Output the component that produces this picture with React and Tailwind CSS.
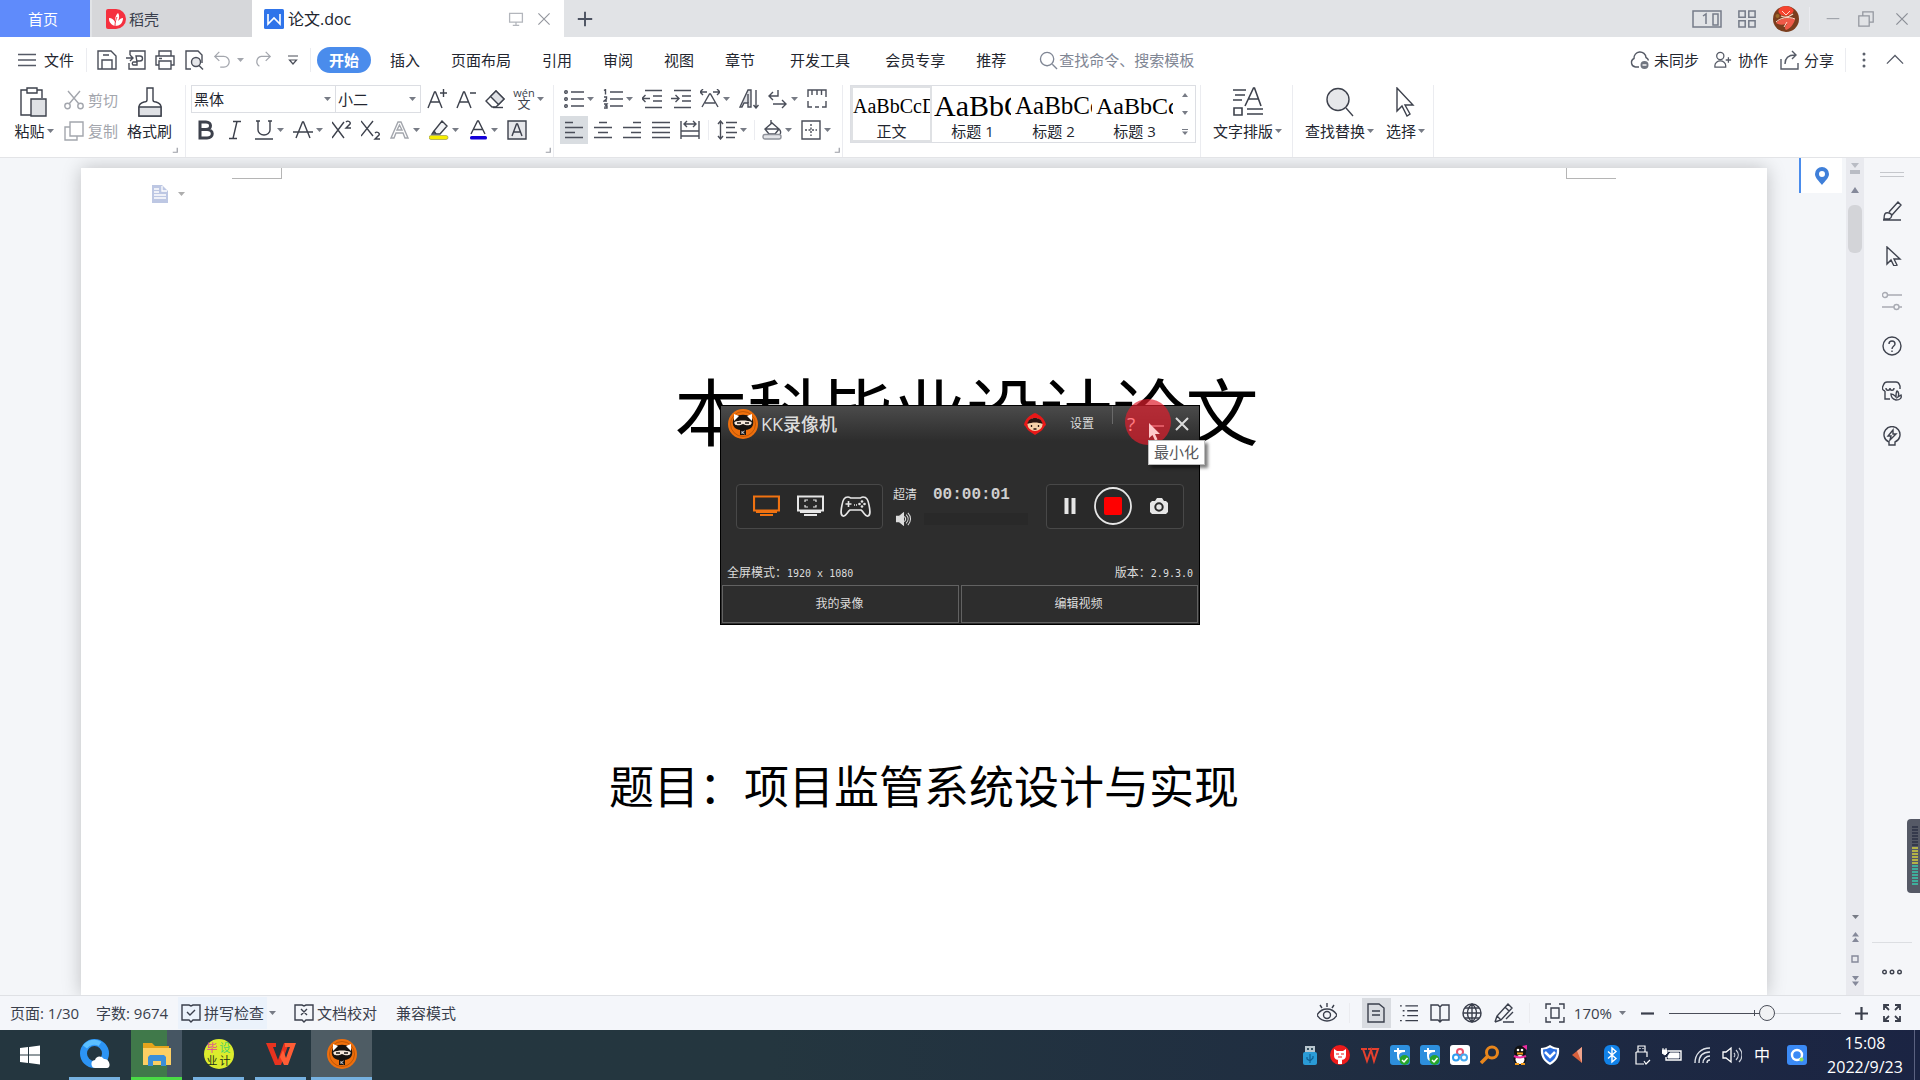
import { useState } from 'react';
import clsx from 'clsx';

// stroke icon drawn on a 20x20 grid
function Icon({ d, className = 'w-5 h-5', box = '0 0 20 20', stroke = 1.4, children }) {
  return (
    <svg viewBox={box} className={clsx('shrink-0', className)} fill="none" stroke="currentColor" strokeWidth={stroke} aria-hidden="true">
      {d && <path d={d} />}
      {children}
    </svg>
  );
}

function Caret({ className = 'text-[#777b85]' }) {
  return (
    <svg viewBox="0 0 7 4" className={clsx('w-[7px] h-1 shrink-0', className)} fill="currentColor" aria-hidden="true">
      <path d="M0 0h7L3.5 4z" />
    </svg>
  );
}

function Glyph({ label, caret, d, children, stroke }) {
  return (
    <button aria-label={label} className="flex items-center gap-[3px] h-7 shrink-0">
      <Icon d={d} stroke={stroke}>{children}</Icon>
      {caret && <Caret />}
    </button>
  );
}

const Divider = ({ className = 'h-[72px]' }) => <div className={clsx('w-px bg-[#ebecf0] shrink-0', className)} />;

const Corner = () => (
  <Icon className="w-1.5 h-1.5 mr-0.5 mb-1 self-end text-[#9a9da5]" box="0 0 8 8" stroke={1.6} d="M7 1v6H1" />
);

function TitleBar() {
  return (
    <header className="flex h-[37px] bg-[#e1e3e6] text-[#3a3f4d]">
      <button className="w-[90px] pr-1 bg-[#5f8bfb] text-white">首页</button>
      <button className="w-[160px] ml-0.5 pl-3.5 flex items-center gap-[3px] bg-[#d6d7da]">
        <svg viewBox="0 0 20 20" className="w-5 h-5" aria-hidden="true">
          <path d="M2 0h8a10 10 0 0 1 0 20H2a2 2 0 0 1-2-2V2a2 2 0 0 1 2-2z" fill="#f5303f" />
          <path d="M9 17C3 15 3 11 3 9c3 0 5 2 6 4 0-5 1-7 3-9 2 3 1 6 0 8 2-2 3-3 5-3 0 5-3 8-8 8z" fill="#fff" />
          <path d="M9 17c0-4 1-7 2-9" stroke="#f5303f" fill="none" />
        </svg>
        稻壳
      </button>
      <div className="w-[312px] bg-white flex items-center pl-3 pr-3 text-[16px] text-[#20242e]">
        <svg viewBox="0 0 20 20" className="w-5 h-5 mr-1" aria-hidden="true">
          <rect width="20" height="20" rx="1.5" fill="#2f74ea" />
          <path d="M4 5v10l6-6 6 6V5" stroke="#fff" strokeWidth="1.6" fill="none" />
        </svg>
        <span className="grow">论文.doc</span>
        <Icon className="w-4 h-4 mr-3 text-[#b3b6bc]" stroke={1.6} d="M2 3h16v11H2zM10 14v4M6 18h8" />
        <button aria-label="关闭标签"><Icon className="w-4 h-4 text-[#93969d]" d="M3 3l14 14M17 3L3 17" /></button>
      </div>
      <button aria-label="新建" className="w-[42px] grid place-items-center">
        <Icon className="w-4 h-4 text-[#4c5361]" stroke={2.4} d="M10 1v18M1 10h18" />
      </button>
      <div className="ml-auto flex items-center pr-2.5 text-[#767c89]">
        <Icon className="w-[30px] h-[18px]" box="0 0 30 18" stroke={1.5} d="M1 1h28v16H1zM21 4h5v11h-5zM11 6l3-2v10" />
        <Icon className="w-[18px] h-[18px] ml-4" stroke={1.7} d="M1 1h7v7H1zM12 1h7v7h-7zM1 12h7v7H1zM12 12h7v7h-7z" />
        <svg viewBox="0 0 26 26" className="w-[26px] h-[26px] ml-[17px]" aria-hidden="true">
          <circle cx="13" cy="13" r="13" fill="#7a3d1d" />
          <path d="M6 3c4-4 10-4 14 0 2 3-2 6-7 7C8 10 4 7 6 3z" fill="#f5432f" />
          <path d="M8 10c4 2 8 1 12-2" stroke="#f7d3c0" strokeWidth="1.2" fill="none" />
          <path d="M3 17c4-5 13-6 19-4-1 6-6 10-9 11-2-2-1-4 1-6-5 1-8 1-11-1z" fill="#ee5a48" />
          <path d="M3 16c4-4 12-6 19-3M11 21l3-5M9 5l4 4 4-4" stroke="#ffd9c9" strokeWidth="1" fill="none" />
          <circle cx="4.500" cy="10" r="2" fill="#9c6a28" />
        </svg>
        <Divider className="h-6 ml-2.5 mr-4 bg-[#c9ccd1]" />
        <button aria-label="最小化"><Icon className="w-3.5 h-3.5 text-[#9498a0]" d="M1 9.500h18" /></button>
        <button aria-label="还原" className="ml-[18px]"><Icon className="w-4 h-4 text-[#9498a0]" stroke={1.6} d="M1 6h13v13H1zM6 6V1h13v13h-5" /></button>
        <button aria-label="关闭" className="ml-5"><Icon className="w-4 h-4 text-[#8a8e96]" stroke={1.5} d="M3 3l14 14M17 3L3 17" /></button>
      </div>
    </header>
  );
}

function MenuRow() {
  return (
    <nav className="flex items-center h-[46px] pl-[18px] pr-4 text-[#23262f] whitespace-nowrap">
      <button className="flex items-center gap-2">
        <Icon className="w-[18px] h-4 text-[#555a66]" box="0 0 18 16" d="M0 2.500h18M0 8h18M0 13.500h18" />
        文件
      </button>
      <Divider className="h-6 ml-3 mr-2.5" />
      <div className="flex items-center text-[#4a4e59]">
        <button aria-label="保存"><Icon d="M1 1h13l5 5v13H1zM5 19v-9h10v9M6 5h6" /></button>
        <button aria-label="输出为PDF" className="ml-[9px]"><Icon d="M4 5V1h15v18H3v-6M0 8h7M4 5l3 3-3 3M10 6h4a2 2 0 0 1 0 5h-3v4H7a2 2 0 0 1 0-3h4z" /></button>
        <button aria-label="打印" className="ml-[9px]"><Icon d="M4 6V1h12v5M4 15H1V6h18v9h-3M4 11h12v8H4zM4 8.500h3" /></button>
        <button aria-label="打印预览" className="ml-[9px]">
          <Icon d="M7 19H2V1h12l4 4v8"><circle cx="12" cy="12" r="4.500" fill="#e6e7ea" /><path d="M15 15.500l4 4" /></Icon>
        </button>
        <button aria-label="撤销" className="flex items-center gap-1.5 ml-[9px] text-[#a3a6ad]">
          <Icon className="w-[18px] h-5" d="M7 1L2 6l5 5M2 6h10a6 6 0 0 1 0 12H8" /><Caret className="text-[#a3a6ad]" />
        </button>
        <button aria-label="恢复" className="ml-2.5 text-[#a3a6ad]"><Icon className="w-[18px] h-5" d="M13 1l5 5-5 5M18 6H8a6 6 0 0 0-2 11" /></button>
        <button aria-label="自定义快速访问" className="ml-4"><Icon className="w-[10px] h-3" box="0 0 10 12" stroke={1.2} d="M0 2h10M1.500 6L5 10l3.500-4z" /></button>
      </div>
      <Divider className="h-6 ml-3 mr-1.5" />
      <button className="w-[54px] h-[26px] rounded-full bg-[#4a8cec] text-white font-bold">开始</button>
      <div className="flex gap-[31px] ml-[19px]">
        <button>插入</button>
        <button>页面布局</button>
        <button>引用</button>
        <button>审阅</button>
        <button>视图</button>
        <button>章节</button>
        <button className="mx-1">开发工具</button>
        <button>会员专享</button>
        <button>推荐</button>
      </div>
      <label className="flex items-center gap-px ml-[33px] text-[#7f8694]">
        <Icon className="w-[19px] h-[19px]" d="M14 14l5 5"><circle cx="8.500" cy="8.500" r="7" /></Icon>
        <input aria-label="搜索" placeholder="查找命令、搜索模板" className="w-40 outline-none placeholder:text-[#7f8694]" />
      </label>
      <div className="ml-auto flex items-center text-[#23262f]">
        <button className="flex items-center gap-1">
          <Icon className="w-5 h-5 text-[#555a66]" d="M9 17H5.500A4.500 4.500 0 0 1 4 8.500a6 6 0 0 1 12-1 4.500 4.500 0 0 1 2.500 3">
            <circle cx="14.500" cy="15" r="4" fill="#70757f" stroke="none" /><path d="M12.500 15h4" stroke="#fff" />
          </Icon>
          未同步
        </button>
        <button className="flex items-center gap-1.5 ml-[15px]">
          <Icon className="w-[18px] h-5 text-[#555a66]" d="M1 18v-2c0-3 3-5 6-5s6 2 6 5v2zM13 10h6M16 7v6"><circle cx="7" cy="5.500" r="4" /></Icon>
          协作
        </button>
        <button className="flex items-center gap-1 ml-3">
          <Icon className="w-5 h-5 text-[#555a66]" d="M1 9v10h17v-6M5 14c0-6 4-9 10-9M12 1l4 4-4 4" />
          分享
        </button>
        <Divider className="h-6 ml-[11px] mr-4" />
        <button aria-label="更多">
          <Icon className="w-1 h-4" box="0 0 4 16" stroke={0}><g fill="#5b606b"><circle cx="2" cy="2" r="1.500" /><circle cx="2" cy="8" r="1.500" /><circle cx="2" cy="14" r="1.500" /></g></Icon>
        </button>
        <button aria-label="收起功能区" className="ml-5"><Icon className="w-[18px] h-[18px] text-[#555a66]" d="M1 14l9-9 9 9" /></button>
      </div>
    </nav>
  );
}

function BigTool({ label, caret, children, className }) {
  return (
    <button className={clsx('flex flex-col items-center', className)}>
      <span className="h-[34px] grid place-items-center">{children}</span>
      <span className="flex items-center gap-0.5 h-6 text-[#23262f]">{label}{caret && <Caret />}</span>
    </button>
  );
}

function FontGroup() {
  return (
    <div className="ml-[5px] w-[354px]">
      <div className="flex items-center gap-[9px] h-7 text-[#3d414c]">
        <div className="flex h-7 w-[230px] border border-[#dcdee3] text-[#23262f] mr-[-3px]">
          <label className="relative flex items-center w-[144px] border-r border-[#dcdee3]">
            <select aria-label="字体" className="appearance-none w-full pl-0.5 outline-none"><option>黑体</option></select>
            <span className="absolute right-1 flex pointer-events-none"><Caret /></span>
          </label>
          <label className="relative flex items-center grow">
            <select aria-label="字号" className="appearance-none w-full pl-0.5 outline-none"><option>小二</option></select>
            <span className="absolute right-1 flex pointer-events-none"><Caret /></span>
          </label>
        </div>
        <Glyph label="增大字号" d="M1 19L7.500 3h1L15 19M3.500 13h9M13 4h7M16.500 0v8" />
        <Glyph label="减小字号" d="M1 19L7.500 3h1L15 19M3.500 13h9M14 4h6" />
        <Glyph label="清除格式"><path d="M11 2l8 8-8 8H7l-6-6z" /><path d="M5.500 7.500l8 8L19 10l-8-8z" fill="#dfe1e5" /><path d="M8 18.500h10" /></Glyph>
        <button aria-label="拼音指南" className="flex items-center gap-[3px] h-7 shrink-0">
          <span aria-hidden="true" className="w-5 flex flex-col items-center text-[11px] leading-[8px]">
            <span>wén</span>
            <span className="text-[13px] leading-[12px]">文</span>
          </span>
          <Caret />
        </button>
      </div>
      <div className="flex items-center gap-[9px] h-7 mt-[3px] pl-[5px] text-[#3d414c]">
        <Glyph label="加粗" stroke={3} d="M4 2h6c6 0 6 7.500 0 7.500H4h7c7 0 7 8.500 0 8.500H4z" />
        <Glyph label="倾斜" d="M8 1.500h8M4 18.500h8M12 1.500L8 18.500" />
        <Glyph label="下划线" caret d="M4 1v9a6 5 0 0 0 12 0V1M2 1h4M14 1h4M1 19h18" />
        <Glyph label="删除线" caret d="M3 18L9.500 2h1L17 18M0 12h20" />
        <Glyph label="上标" d="M0 2l12 16M12 2L0 18M14 2c2-2 5 0 4 2l-4 4h5" />
        <Glyph label="下标" d="M0 1l12 15M12 1L0 16M14 13c2-2 5 0 4 2l-4 4h5" />
        <Glyph label="文字效果" caret><path d="M1 18L8 2h3l7 16h-3l-2-5H6l-2 5zM7 10h5L9.500 5z" stroke="#a3a6ad" /></Glyph>
        <Glyph label="突出显示" caret><path d="M13 1l5 5-7 8H7l-2-3zM5 11l-2 3h4" fill="#f3f4f6" /><rect y="15.500" width="19" height="4" rx="2" fill="#f7ee00" stroke="#8c8b4a" strokeWidth=".6" /></Glyph>
        <Glyph label="字体颜色" caret><path d="M3 14L9.500 1h1L17 14M5.500 9.500h9" /><rect y="16" width="17" x="2" height="3.500" rx="1.500" fill="#1400d8" stroke="none" /></Glyph>
        <Glyph label="字符底纹"><path d="M1 1h18v18H1z" fill="#e6e7ea" /><path d="M5 16l4.500-12h1L15 16M7 12h6" /></Glyph>
      </div>
    </div>
  );
}

function ParagraphGroup() {
  return (
    <div className="ml-[5px] pl-[5px] w-[275px] text-[#4a4e59]">
      <div className="flex items-center gap-[9px] h-7">
        <Glyph label="项目符号" caret d="M7 3h13M7 10h13M7 17h13"><circle cx="2" cy="3" r="1.300" /><circle cx="2" cy="10" r="1.300" /><circle cx="2" cy="17" r="1.300" /></Glyph>
        <Glyph label="编号" caret d="M7 3h13M7 10h13M7 17h13M1 1.500l1.500-1v5M1 8h2.500v2L1 12h3M1 15h3l-1.500 2H4v2H1" />
        <Glyph label="减少缩进" d="M3 1.500h17M11 7h9M11 12h9M3 18.500h17M8 9.500H0M3.500 6L0 9.500 3.500 13" />
        <Glyph label="增加缩进" d="M3 1.500h17M11 7h9M11 12h9M3 18.500h17M0 9.500h8M4.500 6L8 9.500 4.500 13" />
        <Glyph label="字符缩放" caret d="M2 18L9.500 5h1L18 18M5 14h10M0 3h7M3 0L0 3l3 3M20 3h-7M17 0l3 3-3 3" />
        <Glyph label="排序"><path d="M1 18L9 1h3v17h-3v-4H5l-2 4z" fill="#dfe1e5" /><path d="M9 5v9M17 1v18M14.500 16l2.500 3 2.500-3" /></Glyph>
        <Glyph label="换行" caret d="M10 1v6H1M5 3L1 7l4 4M5 15h13M14 11l4 4-4 4" />
        <Glyph label="制表位" d="M1 8V1h18v7M5 1v5M10 1v5M14.500 1v5M1 12v6h4M15 18h4v-6M8 18h4" />
      </div>
      <div className="flex items-center gap-[9px] h-7 mt-[3px]">
        <button aria-label="左对齐" className="h-7 px-1 -mx-1 bg-[#d9dde1]"><Icon d="M1 2.500h8M1 7.500h18M1 12.500h10M1 17.500h18" /></button>
        <Glyph label="居中对齐" d="M6 2.500h8M1 7.500h18M5 12.500h10M1 17.500h18" />
        <Glyph label="右对齐" d="M11 2.500h8M1 7.500h18M9 12.500h10M1 17.500h18" />
        <Glyph label="两端对齐" d="M1 2.500h18M1 7.500h18M1 12.500h18M1 17.500h18" />
        <Glyph label="分散对齐" d="M1 1v18M19 1v18M4 4h12M7 1L4 4l3 3M13 1l3 3-3 3M1 11h18M1 16h18" />
        <Divider className="h-5 -mx-px" />
        <Glyph label="行距" caret d="M3.500 1v18M1 4l2.500-3L6 4M1 16l2.500 3L6 16M9 2.500h11M9 7.500h9M9 12.500h11M9 17.500h9" />
        <Divider className="h-5 -mx-0.5" />
        <Glyph label="底纹颜色" caret><path d="M9 0v4M3 9l7-6 7 6-4 5H7zM3 9h14M17 9c2 2 2 4 1 5" /><rect x="1" y="14.500" width="18" height="4.500" rx="2" fill="#e3e4e8" stroke="#8f929a" /></Glyph>
        <Glyph label="边框" caret><path d="M1 1h18v18H1z" /><path d="M10 4v12M4 10h12" strokeDasharray="2 1.500" /></Glyph>
      </div>
    </div>
  );
}

const styles = [
  { name: '正文', size: 'text-[20px]' },
  { name: '标题 1', size: 'text-[30px]' },
  { name: '标题 2', size: 'text-[25px]' },
  { name: '标题 3', size: 'text-[24px]' },
];

function StyleGallery() {
  return (
    <div className="ml-[7px] flex h-[58px] border border-[#dcdee3]">
      {styles.map((s, i) => (
        <button
          key={s.name}
          className={clsx('w-[81px] h-14 overflow-hidden border-2', i === 0 ? 'border-[#dfe1e4]' : 'border-transparent')}
        >
          <span className={clsx("block h-[34px] leading-[36px] text-left text-black overflow-hidden whitespace-nowrap font-['Liberation_Serif',serif]", s.size)}>AaBbCcDd</span>
          <span className="block h-5 leading-[18px] text-[#23262f]">{s.name}</span>
        </button>
      ))}
      <div className="w-5 flex flex-col items-center justify-around text-[#777b85]">
        <Icon className="w-1.5 h-1" box="0 0 6 4" stroke={0}><path d="M0 4h6L3 0z" fill="currentColor" /></Icon>
        <Icon className="w-1.5 h-1" box="0 0 6 4" stroke={0}><path d="M0 0h6L3 4z" fill="currentColor" /></Icon>
        <Icon className="w-1.5 h-1.5" box="0 0 6 6" stroke={0}><path d="M0 0h6v1H0zM0 2.500h6L3 6z" fill="currentColor" /></Icon>
      </div>
    </div>
  );
}

function Ribbon() {
  return (
    <div className="flex h-[74px] pt-0.5 text-[#3d414c] whitespace-nowrap">
      <div className="flex w-[185px] pl-[13px]">
        <BigTool label="粘贴" caret className="w-[42px]">
          <Icon className="w-7 h-[30px]" box="0 0 28 30" d="M7 3H1v25h10M17 3h5v8M7 1h10v5H7z"><path d="M11 12h15v17H11z" fill="#dfe1e5" /></Icon>
        </BigTool>
        <div className="ml-[9px] w-[54px] text-[#a3a6ad]">
          <button className="flex items-center gap-1 h-[30px]">
            <Icon d="M4 1l11 13M16 1L5 14"><circle cx="3.500" cy="16" r="2.700" /><circle cx="16.500" cy="16" r="2.700" /></Icon>剪切
          </button>
          <button className="flex items-center gap-1 h-8">
            <Icon d="M6 1h13v14H6zM6 6H1v13h12v-4" />复制
          </button>
        </div>
        <BigTool label="格式刷" className="ml-[9px]">
          <Icon className="w-6 h-[30px]" box="0 0 24 30" d="M9 1h6v12c0 1 1 2 3 2 3 1 5 2 5 5v9H1v-9c0-3 2-4 5-5 2 0 3-1 3-2z"><path d="M1 20h22v9H1z" fill="#dfe1e5" /></Icon>
        </BigTool>
        <Corner />
      </div>
      <Divider />
      <FontGroup />
      <Corner />
      <Divider />
      <ParagraphGroup />
      <Corner />
      <div className="w-px bg-[#ebecf0]" />
      <StyleGallery />
      <Divider className="h-[72px] ml-1" />
      <BigTool label="文字排版" caret className="ml-3">
        <Icon className="w-[30px] h-[30px]" box="0 0 30 30" stroke={1.6} d="M0 3h13M2 8h10M0 13h9M12 19L20.500 1h1L28 19M15 12h11M1 21h8v7H1zM14 22h16M14 27h16" />
      </BigTool>
      <Divider className="h-[72px] ml-2.5" />
      <BigTool label="查找替换" caret className="ml-3">
        <Icon className="w-[30px] h-[30px]" box="0 0 30 30" d="M21 21l7 8"><circle cx="13" cy="12.500" r="11" fill="#e6e7ea" /></Icon>
      </BigTool>
      <BigTool label="选择" caret className="ml-3">
        <Icon className="w-6 h-[30px]" box="0 0 24 30" d="M3 1v23l5-5 5 10 3-2-5-9h8z" />
      </BigTool>
      <Divider className="h-[72px] ml-2" />
    </div>
  );
}

function NinjaLogo({ className }) {
  return (
    <svg viewBox="0 0 30 30" className={className} aria-hidden="true">
      <circle cx="15" cy="15" r="15" fill="#ee6f0c" />
      <circle cx="15" cy="15" r="12.500" fill="none" stroke="#a84b05" strokeWidth=".7" />
      <path d="M7 8c4-3 12-3 16 0 3 3 3 8 0 11-4 3-12 3-16 0-3-3-3-8 0-11z" fill="#17120f" />
      <path d="M6 5l5 2-5 5zM24 5l-5 2 5 5z" fill="#fff" />
      <path d="M6.500 13c4-2 13-2 17 0 1 4-5 4-8.500 2-3.500 2-9.500 2-8.500-2z" fill="#f7e9dc" />
      <path d="M9 14h4M17 14h4" stroke="#17120f" strokeWidth="1.500" />
      <path d="M12 20h6v6h-6z" fill="#17120f" />
      <path d="M14 22v3M16.500 22L14.500 23.500l2 1.500" stroke="#fff" strokeWidth=".8" fill="none" />
    </svg>
  );
}

// floating screen recorder window
function Recorder() {
  const mono = "font-['DejaVu_Sans_Mono','Liberation_Mono',monospace] text-[10px]";
  return (
    <section aria-label="KK录像机" className="absolute left-[720px] top-[405px] w-[480px] h-[220px] border border-black bg-[#2d2d2d] text-[#dcdcdc] text-[12px] flex flex-col">
      <div className="flex items-center h-[35px] pl-[7px] pr-2.5 bg-linear-to-b from-[#4b4b4b] to-[#2d2d2d]">
        <NinjaLogo className="w-[30px] h-[30px]" />
        <h2 className="ml-[3px] text-[18px] font-medium">KK录像机</h2>
        <svg viewBox="0 0 22 22" className="w-[22px] h-[22px] ml-auto" aria-hidden="true">
          <path d="M11 0c5 2 10 6 11 12-2 1-3 5-5 6l-6 4-6-4c-2-1-3-5-5-6C1 6 6 2 11 0z" fill="#e81818" />
          <ellipse cx="11" cy="11.500" rx="7.500" ry="6.500" fill="#f6cfa8" />
          <path d="M3.500 11C4 3 18 3 18.500 11 14 9 8 9 3.500 11z" fill="#2a1512" />
          <path d="M7.500 12v2M14.500 12v2M9.500 16h3" stroke="#2a1512" strokeWidth="1.300" />
        </svg>
        <button className="ml-6">设置</button>
        <span className="w-px h-[18px] bg-[#696969] ml-[18px] self-start" />
        <button aria-label="帮助" className="relative z-10 ml-2.5 w-4 text-[19px] leading-5 text-[#ff7d84]">?</button>
        <button aria-label="最小化" className="ml-1.5 w-6 h-5 grid place-items-center"><Icon className="w-3.5 h-3" box="0 0 14 12" stroke={2} d="M0 8h14" /></button>
        <button aria-label="关闭" className="ml-1.5"><Icon className="w-3.5 h-3.5" box="0 0 14 14" stroke={2} d="M1 1l12 12M13 1L1 13" /></button>
      </div>
      <div className="flex items-center mt-[42px] h-[46px] mx-[15px] shrink-0">
        <div className="flex items-center justify-between w-[147px] h-[45px] pl-4 pr-[11px] border border-[#484848] rounded-sm bg-[#292929]">
          <button aria-label="全屏模式" className="text-[#f07211]"><Icon className="w-[27px] h-[22px]" box="0 0 27 22" stroke={2.2} d="M1 1.500h25v14H1zM3 17h21M7 20h13" /></button>
          <button aria-label="区域模式" className="text-[#e6e6e6]"><Icon className="w-[27px] h-[22px]" box="0 0 27 22" stroke={2} d="M1 1.500h25v14H1zM3 17h21M7 20h13"><path d="M8 7V5h3M16 5h3v2M19 10v2h-3M11 12H8v-2" strokeWidth="1.200" /></Icon></button>
          <button aria-label="游戏模式" className="text-[#e6e6e6]">
            <Icon className="w-[31px] h-[22px]" box="0 0 31 22" stroke={1.6} d="M8 2c-4 0-5 3-6 8s-2 10 1 11 4-4 7-6h11c3 2 4 7 7 6s2-6 1-11-2-8-6-8c-2 0-2 1-3 1h-9c-1 0-1-1-3-1zM8.500 6v6M5.500 9h6">
              <g fill="currentColor" stroke="none"><circle cx="22" cy="6.500" r="1.300" /><circle cx="22" cy="11.500" r="1.300" /><circle cx="19.500" cy="9" r="1.300" /><circle cx="24.500" cy="9" r="1.300" /></g>
              <path d="M14 10h3" strokeDasharray="1 1" />
            </Icon>
          </button>
        </div>
        <div className="ml-2.5 self-stretch flex flex-col justify-between">
          <div className="flex items-center h-6">
            <span>超清</span>
            <time className="ml-4 text-[16px] font-bold text-[#cfcfcf] font-['Liberation_Mono',monospace]">00:00:01</time>
          </div>
          <div className="flex items-center h-5 gap-3 pl-0.5">
            <Icon className="w-[17px] h-3.5" box="0 0 18 16" stroke={1.2} d="M10 5c2 2 2 4 0 6M12 3c3 3 3 7 0 10M14 1c4 4 4 10 0 14"><path d="M1 5h3l5-4v14l-5-4H1z" fill="currentColor" /></Icon>
            <span className="w-[104px] h-3 bg-[#292929]" />
          </div>
        </div>
        <div className="ml-auto flex items-center justify-between w-[138px] h-[45px] pl-[17px] pr-[15px] border border-[#484848] rounded-sm bg-[#292929] text-[#e6e6e6]">
          <button aria-label="暂停"><Icon className="w-3 h-4" box="0 0 12 16" stroke={4} d="M2.500 0v16M9.500 0v16" /></button>
          <button aria-label="停止">
            <Icon className="w-[38px] h-[38px]" box="0 0 38 38" stroke={1.8}><circle cx="19" cy="19" r="18" /><rect x="10" y="10" width="18" height="18" rx="2" fill="#f00" stroke="none" /></Icon>
          </button>
          <button aria-label="截图">
            <Icon className="w-[18px] h-4" box="0 0 18 16" stroke={0}><path d="M2 3h3l2-3h5l2 3h2l2 2v9l-2 2H2l-2-2V5z" fill="currentColor" /><circle cx="9" cy="9" r="3.700" fill="none" stroke="#292929" strokeWidth="2" /></Icon>
          </button>
        </div>
      </div>
      <div className="flex justify-between items-center mt-auto h-6 px-1.5">
        <span>全屏模式：<span className={mono}>1920 x 1080</span></span>
        <span>版本：<span className={mono}>2.9.3.0</span></span>
      </div>
      <div className="grid grid-cols-2 gap-0.5 h-[39px] px-px pb-px shrink-0">
        <button className="border border-[#626262] pr-0.5">我的录像</button>
        <button className="border border-[#626262] pr-0.5">编辑视频</button>
      </div>
      <span className="absolute left-[404px] -top-[7px] w-[46px] h-[46px] rounded-full bg-[#e0202d]/70" />
      <svg viewBox="0 0 12 18" className="absolute left-[428px] top-[17px] w-3 h-[18px]" aria-hidden="true"><path d="M0 0v15l3.500-3L6 17.500l2.500-1L6 11h5z" fill="#ffc9cb" /></svg>
      <div role="tooltip" className="absolute left-[427px] top-[34px] h-[25px] px-[5px] leading-[23px] bg-white border border-[#bdbdbd] text-[15px] text-[#55565a] whitespace-nowrap shadow-[3px_3px_3px_rgba(0,0,0,0.5)]">最小化</div>
    </section>
  );
}

function DocumentArea() {
  return (
    <div className="grow min-w-0 bg-[#f4f6f9] overflow-hidden pt-2.5 pl-[81px] pr-8 flex">
      <article className="grow bg-white text-black shadow-[0_0_18px_rgba(0,0,0,0.22)] font-['Liberation_Sans','Noto_Sans_CJK_SC',sans-serif]">
        <div className="flex justify-between px-[151px]">
          <span className="w-[50px] h-[11px] border-r border-b border-[#b5b5b5]" />
          <span className="w-[50px] h-[11px] border-l border-b border-[#b5b5b5]" />
        </div>
        <button aria-label="段落布局" className="flex items-center gap-2.5 ml-[71px] mt-1.5">
          <Icon className="w-4 h-[18px]" box="0 0 16 18" stroke={1.3}>
            <path d="M0 0h10l6 6v12H0z" fill="#bdc7e3" stroke="none" /><path d="M2 4h5M2 7h5M2 10h12M2 13h12M10 1v5h5" stroke="#fff" />
          </Icon>
          <Caret className="text-[#adadad]" />
        </button>
        <h1 className="mt-[172px] pl-[85px] text-center text-[73px] leading-[80px] whitespace-nowrap">本科毕业设计论文</h1>
        <p className="mt-[306px] text-center text-[45px] leading-[56px] whitespace-nowrap">题目：项目监管系统设计与实现</p>
      </article>
    </div>
  );
}

function ScrollRail() {
  return (
    <div className="w-[18px] shrink-0 bg-[#e9eaef] flex flex-col items-center text-[#85899a]">
      <Icon className="w-3 h-3.5 mt-1 text-[#b9bcc4]" box="0 0 12 14" stroke={0}><path d="M2 1h8L6 6zM1 8h10v4H1z" fill="currentColor" /></Icon>
      <Icon className="w-2 h-1.5 mt-[11px]" box="0 0 8 6" stroke={0}><path d="M0 6h8L4 0z" fill="currentColor" /></Icon>
      <div className="w-3.5 h-12 mt-3 rounded-md bg-[#d3d4d8]" />
      <div className="mt-auto mb-[9px] flex flex-col items-center gap-[13px]">
        <Caret />
        <Icon className="w-[7px] h-2.5" box="0 0 7 10" stroke={0}><path d="M0 4.500h7L3.500 0zM0 10h7L3.500 5.500z" fill="currentColor" /></Icon>
        <Icon className="w-2 h-2" box="0 0 8 8" d="M1 1h6v6H1z" />
        <Icon className="w-[7px] h-2.5" box="0 0 7 10" stroke={0}><path d="M0 0h7L3.500 4.500zM0 5.500h7L3.500 10z" fill="currentColor" /></Icon>
      </div>
    </div>
  );
}

function SideBar() {
  return (
    <aside className="relative w-14 shrink-0 bg-[#f5f6f9] flex flex-col items-center gap-[25px] pt-3.5 pr-px text-[#3f434f]">
      <span className="w-6 h-[5px] border-y border-[#c5c7cc] -mb-px" />
      <button aria-label="样式"><Icon d="M1 19h18M2 18c0-5 1-7 5-6s3 5 0 6zM7 11L16 1l3 3-9 10" /></button>
      <button aria-label="选择"><Icon d="M5 1v17l4-4 3 6 3-1-3-6h6z" /></button>
      <button aria-label="属性" className="text-[#a9abb3]"><Icon d="M6 4h14M0 16h12M17 16h3"><circle cx="3" cy="4" r="2.500" /><circle cx="14.500" cy="16" r="2.500" /></Icon></button>
      <button aria-label="帮助"><Icon d="M7 8c0-4 6-4 6 0 0 2-3 2-3 5M10 14.500V16"><circle cx="10" cy="10" r="9" /></Icon></button>
      <button aria-label="稻壳资源"><Icon d="M3 10v8h5M3 10C0 9 0 7 1 5s1-4 4-4h9c3 0 3 2 4 4v3M4 7c0 3 4 3 4 0 0 3 4 3 4 0M14 19c-4-1-5-3-5-6 3 0 4 2 5 3 0-3 0-5 1-6 2 1 2 4 1 6l3-2c1 3-1 5-5 5z" /></button>
      <button aria-label="智能助手"><Icon d="M7 16a8 8 0 1 1 6 0v3H7zM11 4l-5 6h3l-1 4 6-6h-3z" /></button>
      <div className="mt-auto w-10 border-t border-[#dcdee2] pt-[26px] pb-5 flex justify-center">
        <button aria-label="更多面板"><Icon className="w-5 h-1.5" box="0 0 20 6"><circle cx="2.500" cy="3" r="1.800" /><circle cx="10" cy="3" r="1.800" /><circle cx="17.500" cy="3" r="1.800" /></Icon></button>
      </div>
      <div className="absolute right-0 bottom-[102px] w-[13px] h-[74px] rounded-l bg-[#555966] flex items-center justify-end">
        <svg viewBox="0 0 8 60" className="w-2 h-[60px]" aria-hidden="true">
          {Array.from({ length: 20 }, (_, i) => (
            <rect key={i} x="0" y={i * 3} width="6" height="2" fill={i < 7 ? '#353a4c' : i < 13 ? '#b3b347' : '#3fae9c'} />
          ))}
        </svg>
      </div>
    </aside>
  );
}

function StatusBar() {
  const [zoom, setZoom] = useState(58);
  return (
    <footer className="flex items-center h-[35px] shrink-0 pl-2.5 pr-[18px] bg-[#f4f6fa] border-t border-[#dfe1e5] text-[#3a3f4c] whitespace-nowrap">
      <span className="w-[86px]">页面: 1/30</span>
      <span className="w-[82px]">字数: 9674</span>
      <button className="flex items-center gap-[3px] h-8 w-[89px] pl-[3px] bg-[#ebf2fb]">
        <Icon d="M1 2h7l2 1 2-1h7v15h-7l-2 2-2-2H1zM6 9l3 3 5-5" />拼写检查
      </button>
      <Caret className="ml-0.5 text-[#777b85]" />
      <button className="flex items-center gap-[3px] ml-[18px]"><Icon d="M1 2h7l2 1 2-1h7v15h-7l-2 2-2-2H1zM7 6l6 6M13 6l-6 6" />文档校对</button>
      <span className="ml-[19px]">兼容模式</span>
      <div className="ml-auto flex items-center">
        <button aria-label="护眼模式"><Icon className="w-5 h-5" d="M0 12c5-8 15-8 20 0-5 8-15 8-20 0zM10 0v4M3 2l2 3M17 2l-2 3"><circle cx="10" cy="12" r="3.500" /></Icon></button>
        <Divider className="h-5 mx-3" />
        <button aria-label="页面视图" className="w-[29px] h-[30px] grid place-items-center bg-[#d9dce1]"><Icon d="M2 1h11l5 4v14H2zM6 8h8M6 12h8" /></button>
        <button aria-label="大纲" className="ml-[9px]"><Icon className="w-[18px] h-[18px]" d="M0 2h2M6 2h14M3 7.500h2M8 7.500h12M3 13h2M8 13h12M0 18.500h2M6 18.500h14" /></button>
        <button aria-label="阅读版式" className="ml-3"><Icon d="M10 4L8 2H1v15h7l2 2 2-2h7V2h-7zM10 4v15" /></button>
        <button aria-label="Web版式" className="ml-3"><Icon d="M1 10h18M3 5h14M3 15h14M10 1c-6 5-6 13 0 18 6-5 6-13 0-18zM10 1v18"><circle cx="10" cy="10" r="9" /></Icon></button>
        <button aria-label="写作模式" className="ml-3"><Icon d="M1 19l2-6L14 1l4 4L7 17l-6 2M9 19h11M11 4l4 4M3 13l4 4M12 16l7-7" /></button>
        <Divider className="h-5 mx-[15px]" />
        <button aria-label="适应页面"><Icon d="M1 6V1h5M14 1h5v5M19 14v5h-5M6 19H1v-5M6 5h8v10H6z" /></button>
        <button className="flex items-center gap-[7px] ml-[9px]">170%<Caret /></button>
        <button aria-label="缩小" className="ml-[15px]"><Icon className="w-[13px] h-[13px]" box="0 0 13 13" stroke={2.2} d="M0 6.500h13" /></button>
        <div className="relative flex items-center ml-[15px]">
          <input
            type="range"
            aria-label="显示比例"
            value={zoom}
            onChange={(e) => setZoom(e.target.value)}
            className="appearance-none w-[172px] h-px bg-linear-to-r from-[#4a4e59] from-58% to-[#cfd2d7] to-58% [&::-webkit-slider-thumb]:appearance-none [&::-webkit-slider-thumb]:w-4 [&::-webkit-slider-thumb]:h-4 [&::-webkit-slider-thumb]:rounded-full [&::-webkit-slider-thumb]:border [&::-webkit-slider-thumb]:border-[#4a4e59] [&::-webkit-slider-thumb]:bg-[#f1f2f4]"
          />
          <span className="absolute left-[85px] w-px h-1.5 bg-[#4a4e59]" />
        </div>
        <button aria-label="放大" className="ml-3.5"><Icon className="w-[13px] h-[13px]" box="0 0 13 13" stroke={2.2} d="M0 6.500h13M6.500 0v13" /></button>
        <button aria-label="全屏" className="ml-3.5"><Icon className="w-5 h-5" stroke={1.8} d="M2 7V2h5M2 2l5 5M18 7V2h-5M18 2l-5 5M2 13v5h5M2 18l5-5M18 13v5h-5M18 18l-5-5" /></button>
      </div>
    </footer>
  );
}

function TaskButton({ label, className, children, bar = 'bg-[#76b1e0]' }) {
  return (
    <button aria-label={label} className={clsx('h-full flex flex-col items-center', className)}>
      <span className="grow grid place-items-center">{children}</span>
      <span className={clsx('h-[3px] w-full', bar)} />
    </button>
  );
}

function TrayIcon({ children, className = 'w-5' }) {
  return (
    <svg viewBox="0 0 20 20" className={clsx('h-5 shrink-0', className)} fill="none" aria-hidden="true">{children}</svg>
  );
}

const SyncTray = () => (
  <TrayIcon>
    <rect width="20" height="20" rx="3" fill="#2d8fdd" />
    <path d="M4 6h11M8 3v8c0 4 2 5 6 3M8 11c0-3 2-5 7-5" stroke="#fff" strokeWidth="2" />
    <circle cx="14.500" cy="15" r="5" fill="#27a42c" /><path d="M12 15l2 2 3.500-4" stroke="#fff" strokeWidth="1.500" />
  </TrayIcon>
);

function TaskBar() {
  return (
    <div className="flex h-[50px] shrink-0 bg-linear-to-r from-[#24363f] from-40% to-[#1b2443] text-white">
      <button aria-label="开始菜单" className="w-[60px] grid place-items-center">
        <svg viewBox="0 0 20 20" className="w-5 h-5" fill="#fff" aria-hidden="true"><path d="M0 3l8-1v7.500H0zM9 1.900L20 .4v9.100H9zM0 10.500h8V18l-8-1zM9 10.500h11v9.100l-11-1.500z" /></svg>
      </button>
      <div className="flex gap-[11px] ml-[9px]">
        <TaskButton label="QQ浏览器" className="w-[51px]">
          <svg viewBox="0 0 30 30" className="w-[30px] h-[30px]" aria-hidden="true">
            <circle cx="14.500" cy="14.500" r="11" fill="none" stroke="#2c94f5" strokeWidth="7" />
            <path d="M5 8a11 11 0 0 1 15-3" stroke="#5cc0ff" strokeWidth="5" fill="none" />
            <path d="M16 29a4 4 0 0 1-1-8c1-4 6-5 9-1 5-1 8 8 3 9z" fill="#fff" />
          </svg>
        </TaskButton>
        <TaskButton label="文件资源管理器" className="w-[51px] bg-linear-to-r from-[#40794a] from-70% to-[#465663] to-70%" bar="bg-[#4adb45]">
          <svg viewBox="0 0 28 24" className="w-7 h-6" aria-hidden="true">
            <path d="M0 1h9l3 3h14v4H0z" fill="#e5a41c" /><path d="M0 6h28v17H0z" fill="#fccf63" /><path d="M5 24v-9l2-2h14l2 2v9h-5v-5h-8v5z" fill="#3b8fd8" />
          </svg>
        </TaskButton>
        <TaskButton label="毕业设计" className="w-[51px]">
          <span aria-hidden="true" className="w-[30px] h-[30px] rounded-full bg-[#dcec2d] grid grid-cols-2 place-items-center p-0.5 text-[11px] leading-[13px] text-[#20301a]">
            <span className="text-[#e0469b]">毕</span>
            <span className="text-[#4ed16a]">设</span>
            <span>业</span>
            <span>计</span>
          </span>
        </TaskButton>
        <TaskButton label="WPS Office" className="w-[51px]">
          <svg viewBox="0 0 30 24" className="w-[30px] h-6" aria-hidden="true">
            <path d="M0 1h10v4H7l5 13 6-17h5l-8 22h-6z" fill="#e8331f" /><path d="M19 1h11l-8 22h-4l-4-8 3-7 3 8 4-11h-5z" fill="#ff5d35" />
          </svg>
        </TaskButton>
      </div>
      <TaskButton label="KK录像机" className="w-[61px] ml-[5px] bg-[#4e5c64]"><NinjaLogo className="w-[30px] h-[30px]" /></TaskButton>
      <div className="ml-auto flex items-center gap-2.5">
        <TrayIcon><path d="M5 1h10v6H5z" fill="#b9c6ce" /><path d="M7 3h2v2H7zM11 3h2v2h-2z" fill="#35505f" /><rect x="3" y="7" width="14" height="13" rx="2" fill="#2a9bd6" /><path d="M10 9v9M7 12v2l3 2 3-3v-2" stroke="#0f5f92" strokeWidth="1.200" /></TrayIcon>
        <TrayIcon><circle cx="10" cy="10" r="10" fill="#ee1b1b" /><path d="M4 4l3 2h6l3-2v6c0 4-2 5-6 5s-6-1-6-5z" fill="#fff" /><path d="M6 9h3M11 9h3M8 12h4" stroke="#ee1b1b" strokeWidth="1.200" /><path d="M8 15h4v4H8z" fill="#fff" /></TrayIcon>
        <TrayIcon><path d="M1 4h6M3 4l4 12 4-11 3 11 4-12h-6M8 4h3" stroke="#e5402e" strokeWidth="2" /></TrayIcon>
        <SyncTray />
        <SyncTray />
        <TrayIcon><rect width="20" height="20" rx="3" fill="#fff" /><g strokeWidth="2"><circle cx="10" cy="7" r="3" stroke="#e9506b" /><circle cx="6" cy="12.500" r="3" stroke="#2e9df0" /><circle cx="14" cy="12.500" r="3" stroke="#45a8ee" /></g></TrayIcon>
        <TrayIcon><circle cx="12" cy="7.500" r="5.500" stroke="#e8861c" strokeWidth="3" /><path d="M8 11l-7 7" stroke="#e8861c" strokeWidth="3.500" /></TrayIcon>
        <TrayIcon><ellipse cx="10" cy="7" rx="6" ry="6.500" fill="#111" /><path d="M12 1l5-1v5z" fill="#ee2ca0" /><ellipse cx="10" cy="14" rx="6.500" ry="5.500" fill="#111" /><ellipse cx="10" cy="14.500" rx="4.500" ry="4.500" fill="#fff" /><path d="M4 11c4 2 8 2 12 0" stroke="#ee2ca0" strokeWidth="2" /><circle cx="8" cy="5" r="1.300" fill="#fff" /><circle cx="12" cy="5" r="1.300" fill="#fff" /><path d="M7 8.500h6M5 19h4M11 19h4" stroke="#f39b1a" strokeWidth="1.800" /></TrayIcon>
        <TrayIcon><path d="M10 0c3 2 6 3 9 3 1 8-2 13-9 17C3 16 0 11 1 3c3 0 6-1 9-3z" fill="#fff" /><path d="M10 2.500c2 1 5 2 7 2 0 6-2 10-7 13-5-3-7-7-7-13 2 0 5-1 7-2z" fill="#2c6fe0" /><path d="M5 7l5 5 5-5" stroke="#fff" strokeWidth="2.500" /></TrayIcon>
        <TrayIcon><path d="M2 10l10-8v16z" fill="#d8603c" /><path d="M7 6l5-4v16z" fill="#f0a48c" /></TrayIcon>
        <TrayIcon className="w-5 ml-0.5"><rect x="2" width="16" height="20" rx="6" fill="#1182e8" /><path d="M6 6.500l8 7-4 3.500V3l4 3.500-8 7" stroke="#fff" strokeWidth="1.400" /></TrayIcon>
        <TrayIcon><path d="M6 7V1h7v6M4 7h11v5M4 7v12h8M8 3v1M11 3v1M12 16l2 3 4-4" stroke="#fff" strokeWidth="1.200" /></TrayIcon>
        <TrayIcon><path d="M6 6h13v9H4v-3" stroke="#fff" strokeWidth="1.400" /><path d="M8 8h9v5H6v-2zM0 5h5v3l-2 2-3-2zM1 3v2M4 3v2" fill="#fff" stroke="#fff" /></TrayIcon>
        <TrayIcon><path d="M3 18C3 9 9 3 18 3M7 18c0-7 4-11 11-11M11 18c0-4 3-7 7-7M15 18c0-2 1-3 3-3" stroke="#dfe3ea" strokeWidth="1.400" /></TrayIcon>
        <TrayIcon><path d="M1 7h3l5-4v14l-5-4H1z" stroke="#fff" strokeWidth="1.300" /><path d="M12 8c1 1 1 3 0 4M14 5c3 3 3 7 0 10M17 3c4 4 4 10 0 14" stroke="#cdd2dc" strokeWidth="1.200" /></TrayIcon>
        <button className="w-5 text-[16px] leading-5">中</button>
        <TrayIcon className="w-5 ml-[5px]"><rect width="20" height="20" rx="3" fill="#3b8af5" /><circle cx="10" cy="10" r="5" stroke="#fff" strokeWidth="2.400" /><circle cx="14.500" cy="14.500" r="2" fill="#8fe05a" /></TrayIcon>
      </div>
      <time className="ml-3.5 w-[88px] mr-[5px] flex flex-col justify-center items-center text-[16px] leading-6">
        <span>15:08</span>
        <span>2022/9/23</span>
      </time>
      <span className="w-px bg-[#5b6280] mr-[5px]" />
    </div>
  );
}

export default function App() {
  return (
    <div className="relative h-screen flex flex-col overflow-hidden bg-white text-[15px] leading-5 font-['Open_Sans','Noto_Sans_CJK_SC',sans-serif]">
      <TitleBar />
      <MenuRow />
      <Ribbon />
      <main className="grow min-h-0 flex border-t border-[#e3e4e7] bg-[#f4f6f9]">
        <DocumentArea />
        <div className="w-[47px] shrink-0">
          <button aria-label="定位" className="w-[43px] h-[35px] grid place-items-center bg-white border-l-2 border-[#4a8cec]">
            <svg viewBox="0 0 14 18" className="w-3.5 h-[18px]" aria-hidden="true"><path d="M7 0a7 7 0 0 1 7 7c0 4-4 7-7 11C4 14 0 11 0 7a7 7 0 0 1 7-7zm0 4a3 3 0 1 0 0 6 3 3 0 0 0 0-6z" fill="#3f7fd9" /></svg>
          </button>
        </div>
        <ScrollRail />
        <SideBar />
      </main>
      <StatusBar />
      <TaskBar />
      <Recorder />
    </div>
  );
}
